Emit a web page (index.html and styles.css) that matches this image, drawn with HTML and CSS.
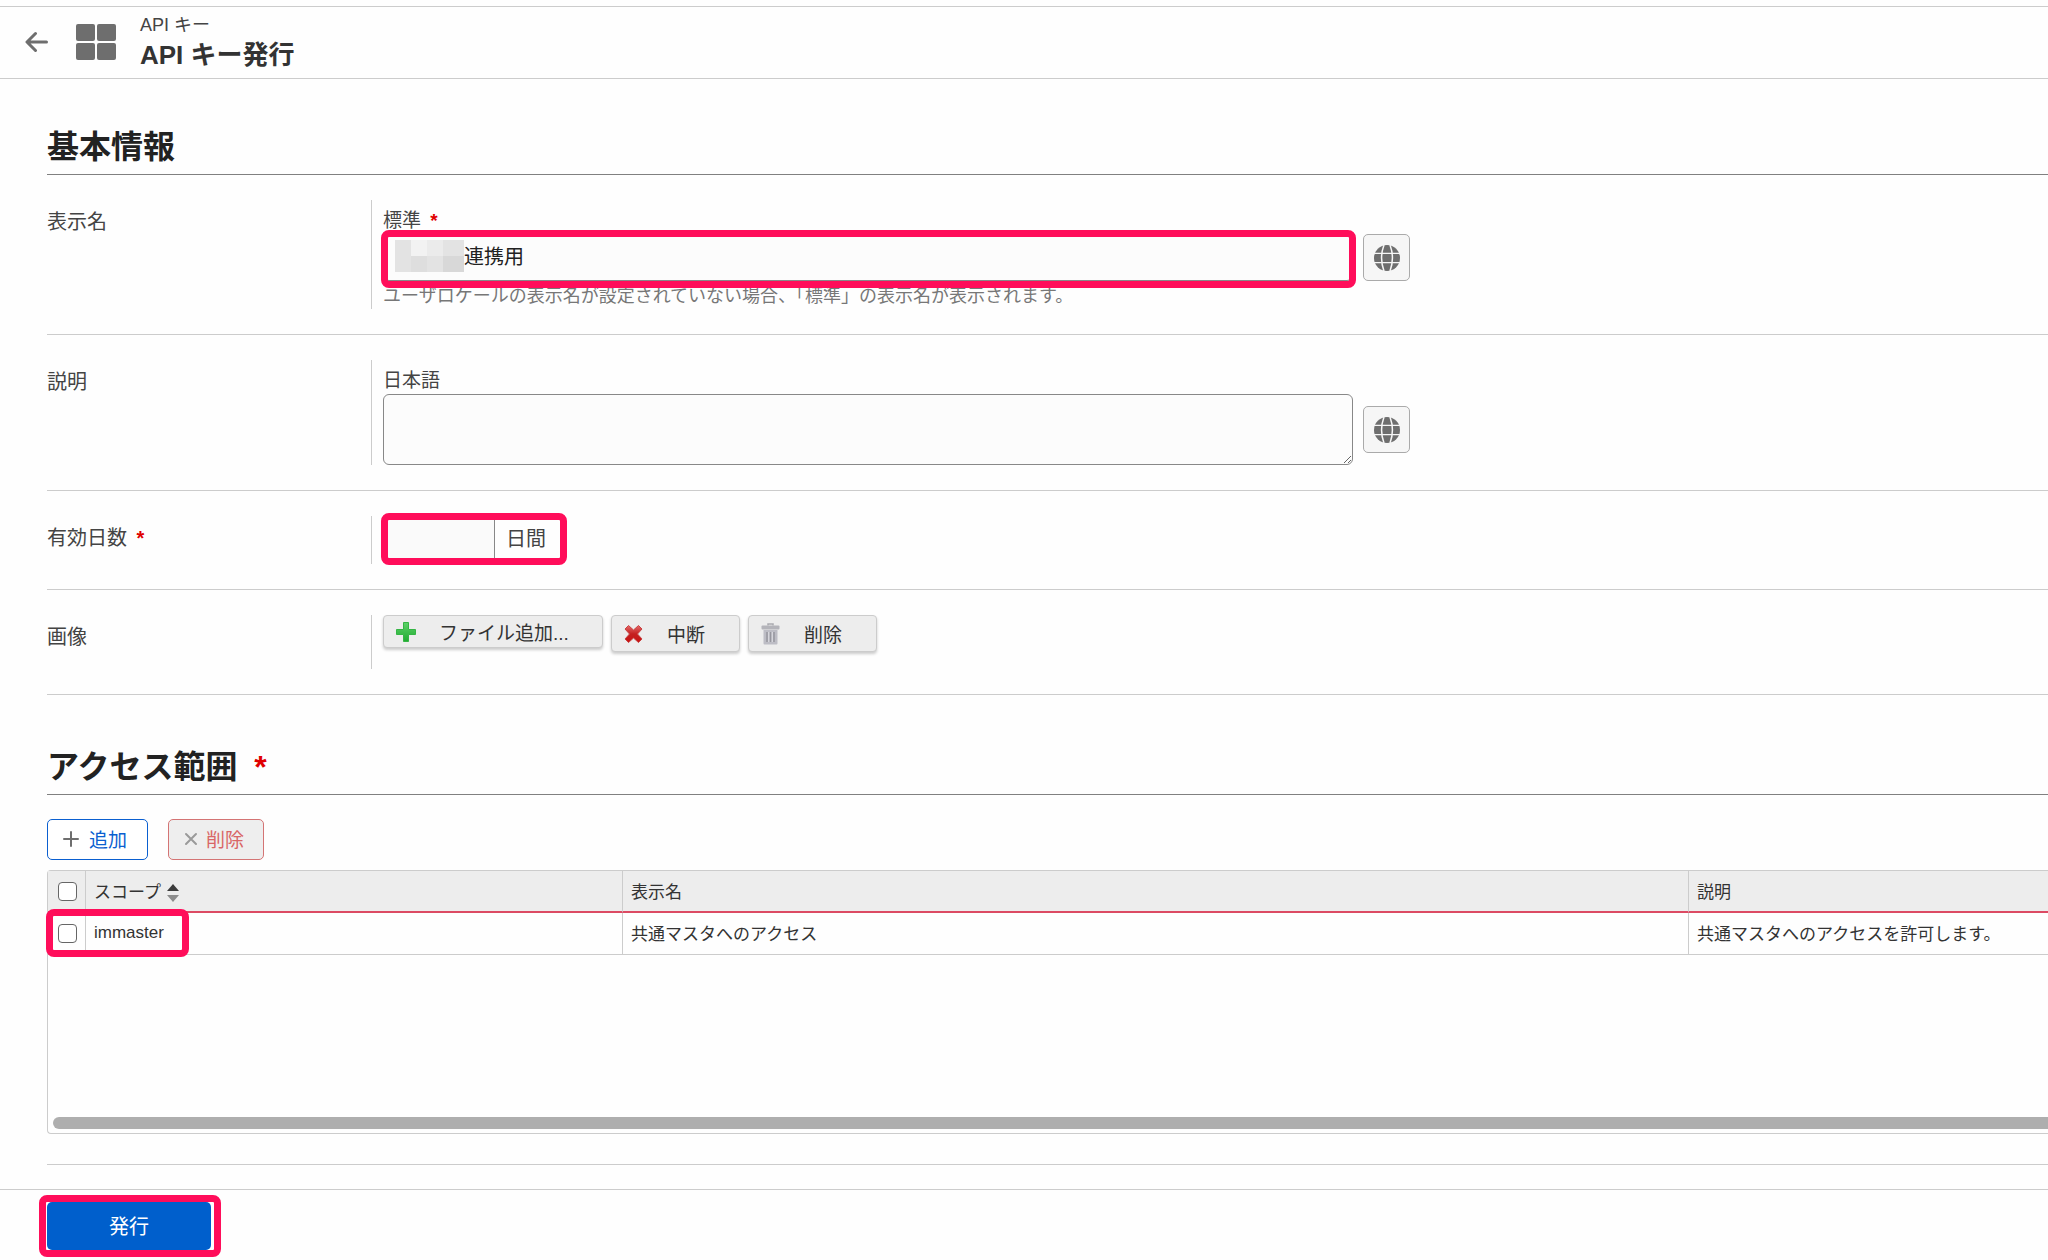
FILE: index.html
```html
<!DOCTYPE html>
<html lang="ja">
<head>
  <meta charset="UTF-8">
  <meta name="viewport" content="width=device-width, initial-scale=1.0">
  <title>API キー発行</title>
  <link rel="stylesheet" href="styles.css">
</head>
<body>
  <!-- アイコン定義 -->
  <svg class="defs" width="0" height="0" aria-hidden="true">
    <symbol id="icon-globe" viewBox="0 0 26 26">
      <circle cx="13" cy="13" r="13" fill="#6e6e6e"/>
      <path d="M0 8.4h26M0 17.6h26" stroke="#f6f6f6" stroke-width="1.3"/>
      <path d="M10 0C7 8 7 18 10 26M16 0c3 8 3 18 0 26" fill="none" stroke="#f6f6f6" stroke-width="1.5"/>
    </symbol>
  </svg>

  <header class="header">
    <a class="back" href="#" aria-label="戻る">
      <svg width="24" height="22" viewBox="0 0 24 22">
        <path d="M21.500 11H3M10.500 2.500L2 11l8.500 8.500" fill="none" stroke="#6e6e6e" stroke-width="3" stroke-linecap="round" stroke-linejoin="round"/>
      </svg>
    </a>
    <svg class="app-icon" width="40" height="36" viewBox="0 0 40 36" fill="#6e6e6e">
      <rect x="0" y="0" width="19" height="17" rx="2"/>
      <rect x="21" y="0" width="19" height="17" rx="2"/>
      <rect x="0" y="19" width="19" height="17" rx="2"/>
      <rect x="21" y="19" width="19" height="17" rx="2"/>
    </svg>
    <div class="titles">
      <p class="subtitle">API キー</p>
      <h1 class="title">API キー発行</h1>
    </div>
  </header>

  <main class="main">
    <section>
      <h2 class="heading">基本情報</h2>

      <div class="row">
        <div class="row-label">表示名</div>
        <div class="row-body">
          <label class="field-label" for="displayName">標準 <span class="required">*</span></label>
          <div class="field">
            <div class="control">
              <input class="text-input" type="text" id="displayName" value="連携用">
              <svg class="mosaic" width="69" height="32" viewBox="0 0 69 32" shape-rendering="crispEdges">
                <rect width="16" height="32" fill="#e3e3e3"/>
                <rect x="16" width="16" height="16" fill="#f2f2f2"/>
                <rect x="32" width="16" height="16" fill="#ebebeb"/>
                <rect x="48" width="21" height="16" fill="#e3e3e3"/>
                <rect x="16" y="16" width="16" height="16" fill="#dedede"/>
                <rect x="32" y="16" width="16" height="16" fill="#e3e3e3"/>
                <rect x="48" y="16" width="21" height="16" fill="#d8d8d8"/>
              </svg>
              <span class="marker marker-name"></span>
            </div>
            <button class="locale-btn" type="button" aria-label="ロケール"><svg width="26" height="26"><use href="#icon-globe"/></svg></button>
          </div>
          <p class="hint">ユーザロケールの表示名が設定されていない場合、「標準」の表示名が表示されます。</p>
        </div>
      </div>

      <div class="row">
        <div class="row-label">説明</div>
        <div class="row-body">
          <label class="field-label" for="description">日本語</label>
          <div class="field">
            <div class="control">
              <textarea class="text-area" id="description"></textarea>
            </div>
            <button class="locale-btn" type="button" aria-label="ロケール"><svg width="26" height="26"><use href="#icon-globe"/></svg></button>
          </div>
        </div>
      </div>

      <div class="row">
        <label class="row-label" for="days">有効日数 <span class="required">*</span></label>
        <div class="row-body">
          <div class="days">
            <input class="days-input" type="text" id="days">
            <span class="days-unit">日間</span>
            <span class="marker marker-days"></span>
          </div>
        </div>
      </div>

      <div class="row">
        <div class="row-label">画像</div>
        <div class="row-body">
          <div class="files">
            <button class="file-btn file-add" type="button">
              <svg width="22" height="22" viewBox="0 0 22 22">
                <defs>
                  <linearGradient id="green" x1="0" y1="0" x2="0" y2="1">
                    <stop offset="0" stop-color="#5ed169"/>
                    <stop offset="1" stop-color="#1fab30"/>
                  </linearGradient>
                </defs>
                <path d="M8.500 1.500h5v7h7v5h-7v7h-5v-7h-7v-5h7z" fill="url(#green)" stroke="#35b545" stroke-linejoin="round"/>
              </svg>
              <span>ファイル追加...</span>
            </button>
            <button class="file-btn" type="button">
              <svg width="22" height="22" viewBox="0 0 22 22">
                <defs>
                  <linearGradient id="red" x1="0" y1="0" x2="0" y2="1">
                    <stop offset="0" stop-color="#e56a6a"/>
                    <stop offset=".5" stop-color="#c42020"/>
                    <stop offset="1" stop-color="#c81414"/>
                  </linearGradient>
                </defs>
                <path d="M5.500 2.500l5 4.500 5-4.500 3.500 3.500-4.500 5 4.500 5-3.500 3.500-5-4.500-5 4.500L2 16l4.500-5L2 6z" fill="url(#red)" stroke="#c94444" stroke-linejoin="round"/>
              </svg>
              <span>中断</span>
            </button>
            <button class="file-btn" type="button">
              <svg width="22" height="22" viewBox="0 0 22 22">
                <path d="M8 2.500v-1.500h5v1.500" fill="none" stroke="#aaaab0" stroke-width="1.500"/>
                <rect x="1.500" y="2.500" width="18" height="4" rx="1" fill="#b4b4ba"/>
                <path d="M3.500 7h14v13.500q0 1-1 1h-12q-1 0-1-1z" fill="#bdbdc5"/>
                <path d="M7 9v10M10.500 9v10M14 9v10" stroke="#97979f" stroke-width="1.500"/>
                <path d="M8.700 9v10M12.300 9v10" stroke="#dcdce2"/>
              </svg>
              <span>削除</span>
            </button>
          </div>
        </div>
      </div>
    </section>

    <section class="scope">
      <h2 class="heading">アクセス範囲 <span class="required">*</span></h2>

      <div class="toolbar">
        <button class="tool-btn add" type="button">
          <svg width="16" height="16" viewBox="0 0 16 16"><path d="M8 1v14M1 8h14" stroke="#6e6e6e" stroke-width="2" stroke-linecap="round"/></svg>
          <span>追加</span>
        </button>
        <button class="tool-btn delete" type="button" disabled>
          <svg width="14" height="16" viewBox="0 0 14 16"><path d="M2 3l10 10M12 3L2 13" stroke="#9a9a9a" stroke-width="2" stroke-linecap="round"/></svg>
          <span>削除</span>
        </button>
      </div>

      <div class="grid">
        <table class="grid-table">
          <colgroup>
            <col class="col-check">
            <col class="col-scope">
            <col class="col-name">
            <col>
          </colgroup>
          <thead>
            <tr>
              <th class="check"><input type="checkbox" aria-label="すべて選択"></th>
              <th>スコープ<svg class="sort" width="12" height="18" viewBox="0 0 12 18"><path d="M0 7l6-7 6 7z" fill="#3c3c3c"/><path d="M0 11h12l-6 7z" fill="#8c8c8c"/></svg></th>
              <th>表示名</th>
              <th>説明</th>
            </tr>
          </thead>
          <tbody>
            <tr>
              <td class="check"><input type="checkbox" aria-label="immaster"></td>
              <td>immaster</td>
              <td>共通マスタへのアクセス</td>
              <td>共通マスタへのアクセスを許可します。</td>
            </tr>
          </tbody>
        </table>
        <div class="scrollbar"></div>
        <span class="marker marker-row"></span>
      </div>
    </section>
  </main>

  <footer class="footer">
    <div class="submit">
      <button class="submit-btn" type="button">発行</button>
      <span class="marker marker-submit"></span>
    </div>
  </footer>
</body>
</html>
```
FILE: styles.css
```css
* {
  margin: 0;
  padding: 0;
  box-sizing: border-box;
}

body {
  padding-top: 6px;
  background: #fefefe;
  color: #444;
  font-family: "Liberation Sans", "Noto Sans CJK JP", sans-serif;
  font-size: 19px;
  overflow-x: hidden;
}

button,
input,
textarea {
  font-family: inherit;
  font-size: inherit;
  color: inherit;
}

svg {
  display: block;
  flex: none;
}

.defs {
  position: absolute;
}

.required {
  color: #e00000;
  font-weight: bold;
  margin-left: 4px;
}

/* 強調枠 */
.marker {
  position: absolute;
  border: 7px solid #ff0d5a;
  border-radius: 8px;
  pointer-events: none;
}

/* ヘッダー */
.header {
  display: flex;
  align-items: center;
  height: 73px;
  padding: 0 0 2px 25px;
  border-top: 1px solid #ccc;
  border-bottom: 1px solid #ccc;
}

.app-icon {
  margin-left: 27px;
}

.titles {
  margin-left: 24px;
}

.subtitle {
  font-size: 18px;
  line-height: 26px;
}

.title {
  color: #333;
  font-size: 26px;
  line-height: 34px;
}

/* 本文 */
.main {
  padding: 44px 0 24px 47px;
}

.heading {
  padding-bottom: 3px;
  border-bottom: 1px solid #808080;
  color: #222;
  font-size: 32px;
  line-height: 48px;
}

.heading .required {
  margin-left: 8px;
}

.row {
  display: flex;
  padding: 25px 0;
  border-bottom: 1px solid #ccc;
}

.row-label {
  flex: none;
  width: 324px;
  padding-top: 8px;
  font-size: 20px;
  line-height: 28px;
}

.row-body {
  flex: 1;
  min-width: 0;
  padding-left: 11px;
  border-left: 1px solid #ccc;
}

.field-label {
  display: block;
  padding-top: 8px;
  line-height: 26px;
}

.field {
  display: flex;
  align-items: center;
  gap: 10px;
}

.control {
  position: relative;
  flex: 0 1 970px;
}

.text-input,
.text-area {
  display: block;
  width: 100%;
  border: 1px solid #888;
  border-radius: 6px;
  background: #fcfcfc;
}

.text-input {
  height: 47px;
  padding: 0 12px 4px 80px;
  color: #222;
  font-size: 20px;
}

.text-area {
  height: 71px;
  padding: 8px 12px;
  resize: vertical;
}

.mosaic {
  position: absolute;
  top: 6px;
  left: 12px;
}

.marker-name {
  inset: -4px -3px -7px -2px;
}

.locale-btn {
  display: flex;
  align-items: center;
  justify-content: center;
  flex: none;
  width: 47px;
  height: 47px;
  border: 1px solid #aaa;
  border-radius: 5px;
  background: #f6f6f6;
}

.hint {
  padding-top: 2px;
  color: #777;
  font-size: 18px;
  line-height: 26px;
}

.days {
  position: relative;
  display: inline-flex;
  vertical-align: top;
  height: 48px;
}

.days-input {
  width: 112px;
  border: 1px solid #888;
  border-radius: 6px 0 0 6px;
  background: #fafafa;
}

.days-unit {
  width: 69px;
  padding-left: 11px;
  font-size: 20px;
  line-height: 46px;
}

.marker-days {
  inset: -3px -3px -1px -2px;
}

.files {
  display: flex;
  align-items: flex-start;
  gap: 8px;
  height: 54px;
}

.file-btn {
  display: flex;
  align-items: center;
  height: 37px;
  width: 129px;
  padding-left: 11px;
  gap: 22px;
  border: 1px solid #ccc;
  border-radius: 4px;
  background: #ededed;
  box-shadow: 0 2px 3px rgba(0, 0, 0, 0.2);
  color: #333;
}

.file-add {
  width: 220px;
  height: 33px;
}

/* アクセス範囲 */
.scope {
  padding-top: 48px;
  border-bottom: 1px solid #ccc;
}

.toolbar {
  display: flex;
  gap: 20px;
  padding: 24px 0 10px;
}

.tool-btn {
  display: flex;
  align-items: center;
  gap: 10px;
  height: 41px;
  padding: 0 20px 2px 15px;
  border: 1px solid #0a5fd0;
  border-radius: 5px;
  background: #fff;
  color: #0a5fd0;
}

.tool-btn.delete {
  gap: 8px;
  padding-right: 19px;
  border-color: #d47474;
  background: #eee;
  color: #d96666;
}

.grid {
  position: relative;
  height: 264px;
  margin-bottom: 30px;
  border: 1px solid #ccc;
  border-right: none;
  border-radius: 4px 0 0 4px;
}

.grid-table {
  width: 100%;
  table-layout: fixed;
  border-collapse: separate;
  border-spacing: 0;
  color: #333;
  font-size: 17px;
}

.col-check {
  width: 38px;
}

.col-scope {
  width: 537px;
}

.col-name {
  width: 1066px;
}

.grid-table th,
.grid-table td {
  height: 42px;
  padding: 0 8px 2px;
  border-right: 1px solid #ccc;
  border-bottom: 1px solid #ccc;
  font-weight: normal;
  text-align: left;
  white-space: nowrap;
}

.grid-table th {
  border-bottom: 2px solid #dc4a63;
  background: #ededed;
}

.grid-table th:last-child,
.grid-table td:last-child {
  border-right: none;
}

.grid-table .check {
  padding: 0 0 0 10px;
}

.check input {
  display: block;
  appearance: none;
  width: 19px;
  height: 19px;
  border: 1px solid #666;
  border-radius: 4px;
  background: #fff;
}

.sort {
  display: inline-block;
  vertical-align: middle;
  margin-left: 6px;
}

.scrollbar {
  position: absolute;
  right: 0;
  bottom: 4px;
  left: 5px;
  height: 12px;
  border-radius: 6px 0 0 6px;
  background: #aeaeae;
}

.marker-row {
  top: 38px;
  left: -2px;
  width: 143px;
  height: 48px;
}

/* フッター */
.footer {
  padding: 12px 47px 10px;
  border-top: 1px solid #ccc;
}

.submit {
  position: relative;
  width: 164px;
}

.submit-btn {
  display: block;
  width: 100%;
  height: 48px;
  padding-bottom: 2px;
  border: none;
  border-radius: 5px;
  background: #005fcc;
  color: #fff;
  font-size: 20px;
}

.marker-submit {
  inset: -7px -10px -7px -8px;
}
```
